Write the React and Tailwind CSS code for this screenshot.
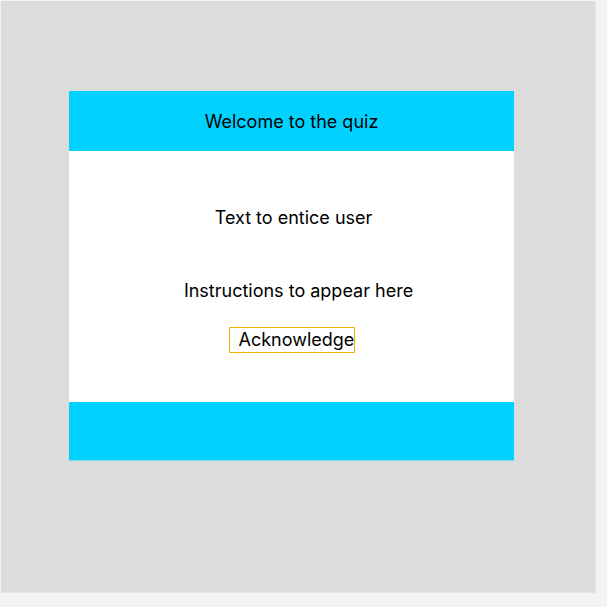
export default function App() {
  return (
    <div className="w-[607px] h-[607px] bg-[#f3f3f3] pt-px pl-px" style={{ fontFamily: 'Inter, "Noto Sans", sans-serif' }}>
      <div className="w-[595px] h-[592px] bg-[#dcdcdc] border-r border-b border-[#e4e4e4] pl-[68px] pt-[90px]">
        <div className="w-[445px] flex flex-col">
          <div className="h-[60px] bg-[#00d1ff] flex items-center justify-center text-[18px] text-black">
            Welcome to the quiz
          </div>
          <div className="h-[251px] bg-white flex flex-col items-center text-[18px] text-black leading-[22px]">
            <p className="mt-[56px] pl-[4px]">Text to entice user</p>
            <p className="mt-[51px] pl-[14px]">Instructions to appear here</p>
            <button className="mt-[25px] h-[26px] w-[126px] border border-[#f2b400] pl-[9px] text-left leading-[24px] whitespace-nowrap">
              Acknowledge
            </button>
          </div>
          <div className="h-[59px] bg-[#00d1ff] border-b border-[#7fdcf0]"></div>
        </div>
      </div>
    </div>
  )
}
